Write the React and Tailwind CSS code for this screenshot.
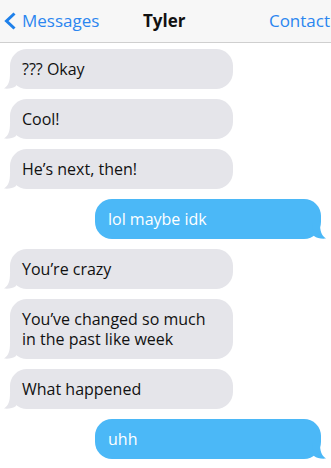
import React from "react";

const messages = [
  { from: "them", text: "??? Okay" },
  { from: "them", text: "Cool!" },
  { from: "them", text: "He’s next, then!" },
  { from: "me", text: "lol maybe idk" },
  { from: "them", text: "You’re crazy" },
  { from: "them", text: "You’ve changed so much in the past like week" },
  { from: "them", text: "What happened" },
  { from: "me", text: "uhh" },
];

const Tail = ({ side, color }) =>
  side === "left" ? (
    <svg
      className="absolute bottom-0 left-[-6px]"
      width="14"
      height="16"
      viewBox="0 0 14 16"
    >
      <path d="M6 0 C6 8 4.5 12.5 0 15.6 C5 16.2 9 15 12 13 L14 0 Z" fill={color} />
    </svg>
  ) : (
    <svg
      className="absolute bottom-0 right-[-5px]"
      width="14"
      height="16"
      viewBox="0 0 14 16"
    >
      <path d="M8 0 C8 8 9.5 12.5 14 15.6 C9 16.2 5 15 2 13 L0 0 Z" fill={color} />
    </svg>
  );

const Bubble = ({ msg }) => {
  const mine = msg.from === "me";
  return (
    <div className={`flex ${mine ? "justify-end pr-[10px]" : "justify-start pl-[10px]"}`}>
      <div
        className={
          mine
            ? "relative w-[226px] rounded-[17px] bg-[#4bb8f7] px-[13px] py-[10px] text-[16px] leading-[20px] font-medium text-white"
            : "relative w-[223px] rounded-[17px] bg-[#e5e5ea] px-[12px] py-[10px] text-[16px] leading-[20px] text-[#111]"
        }
      >
        {msg.text}
        <Tail side={mine ? "right" : "left"} color={mine ? "#4bb8f7" : "#e5e5ea"} />
      </div>
    </div>
  );
};

export default function App() {
  return (
    <div className="w-[331px] h-[468px] overflow-hidden bg-white font-['Open_Sans',sans-serif]">
      <div className="relative flex h-[43px] items-center border-b border-[#cfcfcf] bg-[#f7f7f7]">
        <div className="flex items-center pl-[4px] text-[17px] text-[#2b86f0]">
          <svg width="13" height="18" viewBox="0 0 13 18" className="mr-[5px]">
            <polyline
              points="10.5,1.5 2.5,9 10.5,16.5"
              fill="none"
              stroke="#1e80ea"
              strokeWidth="3"
            />
          </svg>
          Messages
        </div>
        <div className="absolute left-[143px] text-[17px] font-bold text-[#111]">Tyler</div>
        <div className="ml-auto text-[17px] text-[#2b86f0] pr-[1px]">Contact</div>
      </div>
      <div className="flex flex-col gap-[10px] pt-[6px]">
        {messages.map((m, i) => (
          <Bubble key={i} msg={m} />
        ))}
      </div>
    </div>
  );
}
